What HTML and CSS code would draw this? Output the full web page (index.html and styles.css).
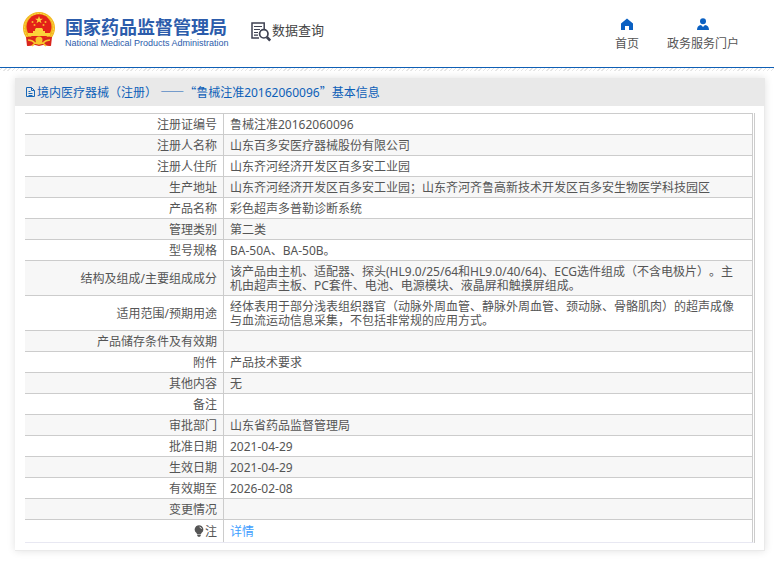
FILE: index.html
```html
<!DOCTYPE html>
<html lang="zh-CN">
<head>
<meta charset="utf-8">
<meta name="viewport" content="width=device-width, initial-scale=1">
<title>国家药品监督管理局 数据查询</title>
<link rel="stylesheet" href="styles.css">
</head>
<body>
<header class="site-header">
  <div class="brand">
    <svg class="emblem" viewBox="0 0 32 35" aria-hidden="true">
      <path fill="#d9251c" d="M4 24h24l-1 10-7-1-4 1-4-1-7 1z"/>
      <circle cx="16" cy="16" r="16" fill="#f3b71f"/>
      <circle cx="16" cy="16" r="14.5" fill="none" stroke="#fbd84a" stroke-width="1" stroke-dasharray="2 1"/>
      <circle cx="16" cy="14.800" r="12.500" fill="#e32119"/>
      <path fill="#fbd43a" d="M16 4l1 2.700h2.900l-2.300 1.700.9 2.800-2.500-1.700-2.500 1.700.9-2.800-2.300-1.700H15z"/>
      <g fill="#f9b52a"><circle cx="9.500" cy="10" r="1"/><circle cx="11.500" cy="13" r="1"/><circle cx="20.500" cy="13" r="1"/><circle cx="22.500" cy="10" r="1"/></g>
      <path fill="#fbd43a" d="M12 17.500l1-1.500h6l1 1.500v1.500h2v2h5v3H5v-3h5v-2h2z"/>
      <path fill="#d9251c" d="M3 25q6-1 10 2h6q4-3 10-2l-1 9-6-1-3-3h-6l-3 3-6 1z"/>
      <circle cx="16" cy="28" r="3.500" fill="#f8c62c"/>
      <path fill="none" stroke="#f8c62c" stroke-width="1.500" d="M5 28q4 0 7 3l4 1 4-1q3-3 7-3M9 34l3-3M23 34l-3-3"/>
    </svg>
    <div class="brand-text">
      <div class="brand-cn">国家药品监督管理局</div>
      <div class="brand-en">National Medical Products Administration</div>
    </div>
  </div>
  <div class="section-name">
    <svg class="search-doc" viewBox="0 0 20 20" aria-hidden="true" fill="none" stroke="#3f4252">
      <path stroke-width="1.500" d="M13.200 7V1H1v15h7"/>
      <path stroke-width="1.200" d="M3 4.500h8M3 7.500h6M3 10.500h4M3 13.200h4"/>
      <circle cx="12.800" cy="11.800" r="4.200" stroke-width="1.700"/>
      <path stroke-width="2.600" d="M15.800 15l3.400 3.600"/>
    </svg>
    <span>数据查询</span>
  </div>
  <nav class="top-nav">
    <a href="#">
      <svg viewBox="0 0 12 12" aria-hidden="true"><path d="M6 .5L0 5.500V12h4V8h4v4h4V5.500z"/></svg>
      <span>首页</span>
    </a>
    <a href="#">
      <svg viewBox="0 0 12 12" aria-hidden="true"><circle cx="6" cy="3.200" r="3"/><path d="M0 12q0-4.500 4-5l2 2 2-2q4 .5 4 5z"/></svg>
      <span>政务服务门户</span>
    </a>
  </nav>
</header>
<main class="card">
  <h1 class="card-title">
    <svg viewBox="0 0 11 12" aria-hidden="true" fill="none" stroke="#1868b8"><path d="M1.500 1.500h5l3 3v6h-8zM6.500 1.500v3h3M3.500 5.500h2M3.500 7.500h4M3.500 9.500h4"/></svg>
    <span>境内医疗器械（注册） <span class="cjk">——“</span>鲁械注准20162060096<span class="cjk">”</span>基本信息</span>
  </h1>
  <div class="card-body">
    <table class="details">
      <tbody>
        <tr><th scope="row">注册证编号</th><td>鲁械注准20162060096</td></tr>
        <tr><th scope="row">注册人名称</th><td>山东百多安医疗器械股份有限公司</td></tr>
        <tr><th scope="row">注册人住所</th><td>山东齐河经济开发区百多安工业园</td></tr>
        <tr><th scope="row">生产地址</th><td>山东齐河经济开发区百多安工业园；山东齐河齐鲁高新技术开发区百多安生物医学科技园区</td></tr>
        <tr><th scope="row">产品名称</th><td>彩色超声多普勒诊断系统</td></tr>
        <tr><th scope="row">管理类别</th><td>第二类</td></tr>
        <tr><th scope="row">型号规格</th><td>BA-50A、BA-50B。</td></tr>
        <tr><th scope="row">结构及组成/主要组成成分</th><td>该产品由主机、适配器、探头(HL9.0/25/64和HL9.0/40/64)、ECG选件组成（不含电极片）。主机由超声主板、PC套件、电池、电源模块、液晶屏和触摸屏组成。</td></tr>
        <tr><th scope="row">适用范围/预期用途</th><td>经体表用于部分浅表组织器官（动脉外周血管、静脉外周血管、颈动脉、骨骼肌肉）的超声成像与血流运动信息采集，不包括非常规的应用方式。</td></tr>
        <tr><th scope="row">产品储存条件及有效期</th><td></td></tr>
        <tr><th scope="row">附件</th><td>产品技术要求</td></tr>
        <tr><th scope="row">其他内容</th><td>无</td></tr>
        <tr><th scope="row">备注</th><td></td></tr>
        <tr><th scope="row">审批部门</th><td>山东省药品监督管理局</td></tr>
        <tr><th scope="row">批准日期</th><td>2021-04-29</td></tr>
        <tr><th scope="row">生效日期</th><td>2021-04-29</td></tr>
        <tr><th scope="row">有效期至</th><td>2026-02-08</td></tr>
        <tr><th scope="row">变更情况</th><td></td></tr>
        <tr class="note"><th scope="row"><svg class="bulb" viewBox="0 0 10 12" aria-hidden="true"><path fill="#555" d="M5 .3a4.300 4.300 0 0 1 2.500 7.800L7 9H3l-.5-.9A4.300 4.300 0 0 1 5 .3zM3.200 9.600h3.600v1L6 11.800H4l-.8-1.200z"/><path fill="none" stroke="#fff" stroke-width=".8" d="M5.500 2q1.700.3 2 2"/></svg>注</th><td><a href="#">详情</a></td></tr>
      </tbody>
    </table>
  </div>
</main>
</body>
</html>
```
FILE: styles.css
```css
* {
  box-sizing: border-box;
}

body {
  margin: 0;
  background: #fff;
  color: #555;
  font-family: "Noto Sans", "Noto Sans CJK SC", sans-serif;
  font-size: 12px;
  line-height: 14px;
  text-spacing-trim: space-all;
}

a {
  text-decoration: none;
}

svg {
  display: block;
  flex: none;
}

.site-header {
  display: flex;
  align-items: flex-start;
  height: 72px;
  padding: 12px 35px 0 23px;
  background:
    linear-gradient(#0f5fb5, #0f5fb5) 0 67px / 100% 1px no-repeat,
    repeating-linear-gradient(135deg, #fff 0 1px, #e6e6e6 1px 2px, #fff 2px 3px) 0 68px / 100% 3px no-repeat;
}

.brand {
  display: flex;
  gap: 10px;
}

.emblem {
  width: 32px;
  height: 35px;
}

.brand-text {
  width: 162px;
  padding-top: 4px;
  color: #2c5cab;
  white-space: nowrap;
}

.brand-cn {
  font: 700 18px/20px "Noto Sans CJK SC", sans-serif;
}

.brand-en {
  margin-top: 1px;
  font: 400 9px/12px "Liberation Sans", sans-serif;
}

.section-name {
  display: flex;
  gap: 1px;
  margin: 10px 0 0 24px;
  color: #444;
  font-size: 13px;
  line-height: 17px;
}

.search-doc {
  width: 20px;
  height: 20px;
}

.top-nav {
  display: flex;
  gap: 28px;
  margin: 6px 0 0 auto;
}

.top-nav a {
  display: flex;
  flex-direction: column;
  align-items: center;
  gap: 7px;
  color: #555;
}

.top-nav svg {
  width: 12px;
  height: 12px;
  fill: #0a60c2;
}

.card {
  margin: 6px 9px 10px 15px;
  box-shadow: 0 0 8px rgba(0, 0, 0, 0.12);
}

.card-title {
  display: flex;
  align-items: center;
  gap: 1px;
  height: 28px;
  margin: 0;
  padding: 0 10px;
  background: #e9e9e9;
  color: #0d5fb8;
  font-size: 12px;
  font-weight: 400;
}

.card-title svg {
  width: 11px;
  height: 12px;
}

.cjk {
  font-family: "Noto Sans CJK SC", sans-serif;
}

.card-body {
  padding: 7px 9px 7px 10px;
  border: solid #eaeaea;
  border-width: 0 1px 1px 0;
}

.details {
  width: 100%;
  border-right: 3px double #ccc;
  border-bottom: 1px solid #e8e8f2;
  border-collapse: separate;
  border-spacing: 0;
}

.details th,
.details td {
  padding: 4px 6px 2px;
  border-top: 1px solid #ccc;
  height: 21px;
  font-weight: 400;
}

.details th {
  width: 198px;
  text-align: right;
}

.details td {
  padding-right: 10px;
  border-left: 1px solid #ccc;
  text-align: left;
}

.details tr:nth-child(even) {
  background: #f7f7f7;
}

.details .note th,
.details .note td {
  padding-top: 5px;
  padding-bottom: 3px;
}

.details a {
  color: #409eff;
}

.bulb {
  display: inline-block;
  width: 10px;
  height: 12px;
  margin-right: 1px;
  vertical-align: -1px;
}
```
